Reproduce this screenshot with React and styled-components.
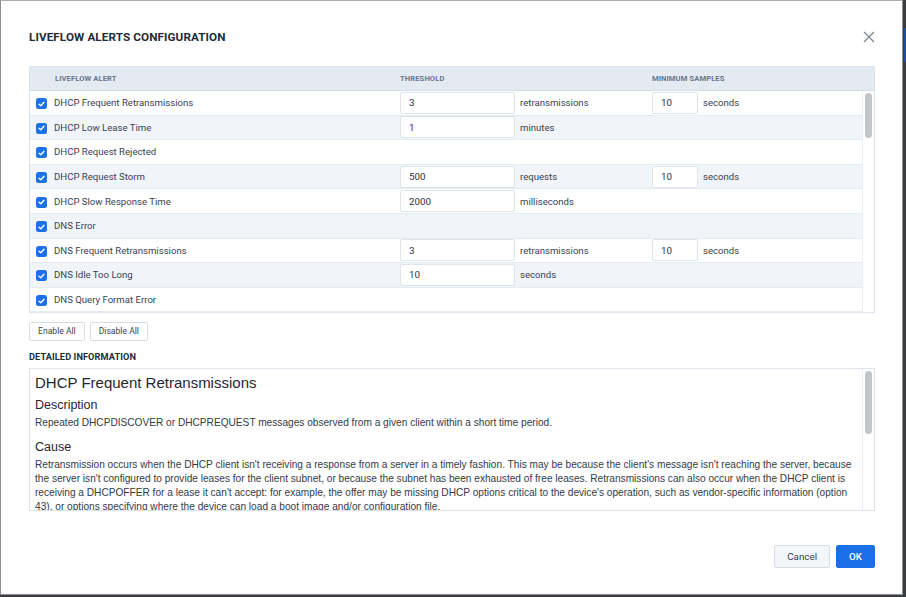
import React from "react";
import styled, { createGlobalStyle } from "styled-components";

const Global = createGlobalStyle`
  html, body { margin: 0; padding: 0; }
  body { background: #3b3d40; font-family: Roboto, "Liberation Sans", Arial, sans-serif; }
  * { box-sizing: border-box; }
`;

const Backdrop = styled.div`
  width: 906px;
  height: 597px;
  background: #3b3d40;
  overflow: hidden;
  position: relative;
`;

const Dialog = styled.div`
  width: 903px;
  height: 595px;
  background: #fff;
  border: 1px solid #8d8f93;
  border-top-color: #a9abaf;
  padding: 27px 27px 0 28px;
  display: flex;
  flex-direction: column;
`;

const TitleRow = styled.div`
  display: flex;
  align-items: center;
  justify-content: space-between;
  height: 18px;
  margin-bottom: 20px;
`;

const Title = styled.h1`
  margin: 0;
  font-size: 11.7px;
  font-weight: 700;
  color: #232c3b;
  letter-spacing: 0.1px;
`;

const CloseBtn = styled.button`
  border: 0;
  background: none;
  padding: 0;
  margin-right: -2px;
  width: 16px;
  height: 16px;
  display: flex;
  align-items: center;
  justify-content: center;
  cursor: pointer;
`;

const Table = styled.div`
  border: 1px solid #dde3ea;
  display: flex;
  flex-direction: column;
`;

const cols = "18px 346px 252px 1fr";

const HeaderRow = styled.div`
  display: grid;
  grid-template-columns: ${cols};
  align-items: center;
  height: 24px;
  padding-left: 6px;
  background: #e4eaf2;
  border-bottom: 1px solid #d6dde7;
  font-size: 7.6px;
  font-weight: 700;
  color: #6b7689;
  letter-spacing: 0.1px;
  text-transform: uppercase;
`;

const Scroller = styled.div`
  display: flex;
  height: ${(p) => p.$h}px;
`;

const Viewport = styled.div`
  flex: 1;
  min-width: 0;
  overflow: hidden;
`;

const Track = styled.div`
  width: ${(p) => p.$w}px;
  flex: none;
  border-left: 1px solid #eceff3;
  background: #fff;
  padding: 2px 0 0 2px;
`;

const Thumb = styled.div`
  width: 7px;
  height: ${(p) => p.$h}px;
  border-radius: 4px;
  background: #c3c5c8;
`;

const Row = styled.div`
  display: grid;
  grid-template-columns: ${cols};
  align-items: center;
  height: 24.6px;
  padding-left: 6px;
  background: ${(p) => (p.$alt ? "#f1f4f9" : "#fff")};
  border-bottom: 1px solid #e6ebf1;
  font-size: 9.6px;
  color: #3a4352;
`;

const Check = styled.span`
  width: 11px;
  height: 11px;
  border-radius: 2.5px;
  background: #1b72e8;
  display: flex;
  align-items: center;
  justify-content: center;
  margin-top: 2px;
`;

const Field = styled.div`
  display: flex;
  align-items: center;
  gap: 5px;
`;

const Input = styled.div`
  width: ${(p) => p.$w}px;
  height: 22px;
  border: 1px solid #dfe4eb;
  border-radius: 2px;
  background: #fff;
  padding-left: 8px;
  display: flex;
  align-items: center;
  font-size: 9.8px;
  color: #2c3442;
`;

const Unit = styled.span`
  color: #3a4352;
`;

const ButtonBar = styled.div`
  display: flex;
  gap: 5px;
  margin-top: 9px;
`;

const SmallBtn = styled.button`
  height: 19px;
  padding: 0 8px;
  border: 1px solid #d6dce4;
  border-radius: 2px;
  background: #fff;
  font-family: inherit;
  font-size: 8.6px;
  line-height: 17px;
  color: #3a4352;
`;

const SectionLabel = styled.div`
  margin-top: 10px;
  font-size: 9.2px;
  font-weight: 700;
  color: #232c3b;
  letter-spacing: 0.1px;
`;

const Detail = styled.div`
  margin-top: 6px;
  border: 1px solid #dde3ea;
`;

const DetailBody = styled.div`
  padding: 4px 4px 0 5px;
  font-family: "Liberation Sans", Arial, sans-serif;
  color: #2b3340;
`;

const DetailTitle = styled.h2`
  margin: 0;
  font-size: 15px;
  font-weight: 400;
  line-height: 19px;
  color: #1f2733;
`;

const DetailHeading = styled.h3`
  margin: 5px 0 0;
  font-size: 12.5px;
  font-weight: 400;
  line-height: 16px;
  color: #1f2733;
`;

const Para = styled.p`
  margin: 3px 0 9px;
  font-size: 10.15px;
  line-height: 14px;
  color: #333b47;
`;

const Footer = styled.div`
  margin-top: auto;
  margin-bottom: 26px;
  display: flex;
  justify-content: flex-end;
  gap: 6px;
`;

const FooterBtn = styled.button`
  height: 23px;
  padding: 0 12px;
  border-radius: 2px;
  font-family: inherit;
  font-size: 9.8px;
  font-weight: ${(p) => (p.$primary ? 500 : 400)};
  border: 1px solid ${(p) => (p.$primary ? "#1a6fe8" : "#d7dde5")};
  background: ${(p) => (p.$primary ? "#1a6fe8" : "#f3f5f8")};
  color: ${(p) => (p.$primary ? "#fff" : "#3a4352")};
`;

const SideStrip = styled.div`
  position: absolute;
  right: 0;
  top: 28px;
  width: 2px;
  height: 34px;
  background: #1d4f9a;
`;

const alerts = [
  { name: "DHCP Frequent Retransmissions", t: "3", u: "retransmissions", m: "10" },
  { name: "DHCP Low Lease Time", t: "1", u: "minutes" },
  { name: "DHCP Request Rejected" },
  { name: "DHCP Request Storm", t: "500", u: "requests", m: "10" },
  { name: "DHCP Slow Response Time", t: "2000", u: "milliseconds" },
  { name: "DNS Error" },
  { name: "DNS Frequent Retransmissions", t: "3", u: "retransmissions", m: "10" },
  { name: "DNS Idle Too Long", t: "10", u: "seconds" },
  { name: "DNS Query Format Error" },
  { name: "DNS Query Name Error" },
];

const Checkmark = () => (
  <svg width="7" height="6" viewBox="0 0 7 6" fill="none">
    <path d="M1 3.2 L2.8 4.8 L6 1.2" stroke="#fff" strokeWidth="1.3" strokeLinecap="round" strokeLinejoin="round" />
  </svg>
);

export default function App() {
  return (
    <>
      <Global />
      <Backdrop>
        <SideStrip />
        <Dialog>
          <TitleRow>
            <Title>LIVEFLOW ALERTS CONFIGURATION</Title>
            <CloseBtn aria-label="Close">
              <svg width="12" height="12" viewBox="0 0 12 12">
                <path d="M1 1 L11 11 M11 1 L1 11" stroke="#7b8190" strokeWidth="1.2" />
              </svg>
            </CloseBtn>
          </TitleRow>
          <Table>
            <HeaderRow>
              <span />
              <span style={{ paddingLeft: 1 }}>Liveflow Alert</span>
              <span>Threshold</span>
              <span>Minimum Samples</span>
            </HeaderRow>
            <Scroller $h={221}>
              <Viewport>
                {alerts.map((a, i) => (
                  <Row key={a.name} $alt={i % 2 === 1}>
                    <Check><Checkmark /></Check>
                    <span>{a.name}</span>
                    <Field>
                      {a.t && (
                        <>
                          <Input $w={115}>{a.t}</Input>
                          <Unit>{a.u}</Unit>
                        </>
                      )}
                    </Field>
                    <Field>
                      {a.m && (
                        <>
                          <Input $w={46}>{a.m}</Input>
                          <Unit>seconds</Unit>
                        </>
                      )}
                    </Field>
                  </Row>
                ))}
              </Viewport>
              <Track $w={12}><Thumb $h={45} /></Track>
            </Scroller>
          </Table>
          <ButtonBar>
            <SmallBtn>Enable All</SmallBtn>
            <SmallBtn>Disable All</SmallBtn>
          </ButtonBar>
          <SectionLabel>DETAILED INFORMATION</SectionLabel>
          <Detail>
            <Scroller $h={141}>
              <Viewport>
                <DetailBody>
                  <DetailTitle>DHCP Frequent Retransmissions</DetailTitle>
                  <DetailHeading>Description</DetailHeading>
                  <Para>
                    Repeated DHCPDISCOVER or DHCPREQUEST messages observed from a given client within a short time period.
                  </Para>
                  <DetailHeading>Cause</DetailHeading>
                  <Para>
                    Retransmission occurs when the DHCP client isn't receiving a response from a server in a timely fashion. This may be because the client's message isn't reaching the server, because the server isn't configured to provide leases for the client subnet, or because the subnet has been exhausted of free leases. Retransmissions can also occur when the DHCP client is receiving a DHCPOFFER for a lease it can't accept: for example, the offer may be missing DHCP options critical to the device's operation, such as vendor-specific information (option 43), or options specifying where the device can load a boot image and/or configuration file.
                  </Para>
                </DetailBody>
              </Viewport>
              <Track $w={12}><Thumb $h={63} /></Track>
            </Scroller>
          </Detail>
          <Footer>
            <FooterBtn>Cancel</FooterBtn>
            <FooterBtn $primary>OK</FooterBtn>
          </Footer>
        </Dialog>
      </Backdrop>
    </>
  );
}
